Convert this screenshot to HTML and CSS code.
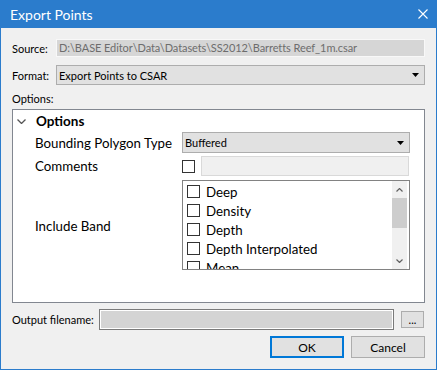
FILE: index.html
```html
<!DOCTYPE html>
<html lang="en">
<head>
    <meta charset="UTF-8">
    <title>Export Points</title>
    <link rel="stylesheet" href="styles.css">
</head>
<body>
    <div class="window">
        <div class="titlebar">
            <span class="title">Export Points</span>
            <svg class="close" width="10" height="10" viewBox="0 0 10 10">
                <path d="M0.5 0.5 L9.5 9.5 M9.5 0.5 L0.5 9.5" stroke="#fff" stroke-width="1.1" fill="none"/>
            </svg>
        </div>

        <div class="content">
            <div class="row row-source">
                <span class="lbl">Source:</span>
                <div class="field-readonly">D:\BASE Editor\Data\Datasets\SS2012\Barretts Reef_1m.csar</div>
            </div>

            <div class="row row-format">
                <span class="lbl">Format:</span>
                <div class="combo combo-format">
                    <span>Export Points to CSAR</span>
                    <svg class="combo-arrow" width="7" height="4" viewBox="0 0 7 4"><path d="M0 0 H7 L3.5 4 Z" fill="#000"/></svg>
                </div>
            </div>

            <div class="options-label">Options:</div>

            <div class="panel">
                <div class="group-head">
                    <svg class="chevron" width="9" height="5" viewBox="0 0 9 5"><path d="M0.5 0.5 L4.5 4.5 L8.5 0.5" stroke="#555" stroke-width="1.3" fill="none"/></svg>
                    <span>Options</span>
                </div>

                <div class="prop-grid">
                    <div class="prop-label">Bounding Polygon Type</div>
                    <div class="combo combo-prop">
                        <span>Buffered</span>
                        <svg class="combo-arrow" width="7" height="4" viewBox="0 0 7 4"><path d="M0 0 H7 L3.5 4 Z" fill="#000"/></svg>
                    </div>

                    <div class="prop-label">Comments</div>
                    <div class="comments">
                        <span class="check"></span>
                        <div class="field-disabled"></div>
                    </div>

                    <div class="prop-label prop-label-band">Include Band</div>
                    <div class="listbox">
                        <div class="list-items">
                            <div class="item"><span class="check"></span>Deep</div>
                            <div class="item"><span class="check"></span>Density</div>
                            <div class="item"><span class="check"></span>Depth</div>
                            <div class="item"><span class="check"></span>Depth Interpolated</div>
                            <div class="item"><span class="check"></span>Mean</div>
                        </div>
                        <div class="scrollbar">
                            <div class="sb-btn">
                                <svg width="7" height="4" viewBox="0 0 7 4"><path d="M0.5 3.5 L3.5 0.5 L6.5 3.5" stroke="#606060" stroke-width="1.2" fill="none"/></svg>
                            </div>
                            <div class="sb-track"><div class="sb-thumb"></div></div>
                            <div class="sb-btn">
                                <svg width="7" height="4" viewBox="0 0 7 4"><path d="M0.5 0.5 L3.5 3.5 L6.5 0.5" stroke="#606060" stroke-width="1.2" fill="none"/></svg>
                            </div>
                        </div>
                    </div>
                </div>
            </div>

            <div class="row row-output">
                <span class="lbl lbl-output">Output filename:</span>
                <div class="field-output"></div>
                <button class="btn btn-browse">...</button>
            </div>

            <div class="buttons">
                <button class="btn btn-dialog btn-default">OK</button>
                <button class="btn btn-dialog">Cancel</button>
            </div>
        </div>
    </div>
</body>
</html>
```

FILE: styles.css
```css
* {
    margin: 0;
    padding: 0;
    box-sizing: border-box;
}

body {
    background: #fff;
    font-family: "Lato", "Open Sans", sans-serif;
    font-size: 11px;
    color: #000;
}

.window {
    width: 437px;
    height: 370px;
    border: 1px solid #2b7ccc;
    border-top: none;
    background: #f0f0f0;
}

/* title bar */
.titlebar {
    height: 28px;
    margin: 0 -1px;
    background: #2b7ccc;
    display: flex;
    align-items: center;
    justify-content: space-between;
    padding: 0 9px 0 10px;
}

.title {
    color: #fff;
    font-size: 14px;
}

.close {
    display: block;
}

.content {
    padding: 11px 11px 0 11px;
}

.row {
    display: flex;
    align-items: center;
}

.lbl {
    width: 44px;
    flex: none;
}

.row-source {
    height: 18px;
}

.field-readonly {
    flex: 1;
    height: 18px;
    line-height: 16px;
    padding-left: 2px;
    background: #d6d6d6;
    border: 1px solid #f8f8f8;
    color: #6d6d6d;
    letter-spacing: -0.08px;
    white-space: nowrap;
    overflow: hidden;
}

.row-format {
    margin-top: 8px;
    height: 20px;
}

.combo {
    display: flex;
    align-items: center;
    justify-content: space-between;
    background: #e1e1e1;
    border: 1px solid #adadad;
    padding: 0 5px 0 2px;
}

.combo-format {
    flex: 1;
    height: 20px;
}

.combo-arrow {
    display: block;
}

.options-label {
    margin: 5px 0 2px;
    height: 17px;
    line-height: 17px;
}

/* options panel */
.panel {
    height: 194px;
    background: #fff;
    border: 1px solid #828790;
}

.group-head {
    height: 22px;
    display: flex;
    align-items: center;
    padding-left: 4px;
}

.chevron {
    display: block;
    margin-right: 10px;
}

.group-head span {
    font-weight: bold;
    font-size: 13.5px;
}

.prop-grid {
    display: grid;
    grid-template-columns: 147px 228px;
    grid-template-rows: 21px 20px 90px;
    row-gap: 3px;
    padding-left: 22px;
    font-size: 13.3px;
}

.prop-label {
    display: flex;
    align-items: center;
}

.prop-label-band {
    padding-top: 3px;
}

.combo-prop {
    height: 21px;
    font-size: 11px;
}

.comments {
    display: flex;
    align-items: center;
}

.check {
    display: block;
    flex: none;
    width: 13px;
    height: 13px;
    border: 1px solid #333;
    background: #fff;
}

.field-disabled {
    flex: 1;
    height: 20px;
    margin-left: 6px;
    margin-right: 1px;
    background: #f0f0f0;
    border: 1px solid #d9d9d9;
}

.listbox {
    margin-top: 1px;
    height: 90px;
    border: 1px solid #828282;
    display: flex;
    overflow: hidden;
}

.list-items {
    flex: 1;
    padding: 1px 0 0 4px;
    overflow: hidden;
}

.item {
    height: 19px;
    display: flex;
    align-items: center;
    gap: 6px;
    white-space: nowrap;
}

.scrollbar {
    width: 15px;
    margin-right: 2px;
    background: #f0f0f0;
    display: flex;
    flex-direction: column;
}

.sb-btn {
    height: 17px;
    display: flex;
    align-items: center;
    justify-content: center;
}

.sb-btn svg {
    display: block;
}

.sb-track {
    flex: 1;
}

.sb-thumb {
    height: 30px;
    background: #cdcdcd;
}

/* bottom */
.row-output {
    margin-top: 6px;
    height: 21px;
}

.lbl-output {
    width: 87px;
}

.field-output {
    width: 295px;
    height: 21px;
    background: #d4d4d4;
    border: 1px solid #7a7a7a;
    box-shadow: inset 0 0 0 1px #fff;
}

.btn {
    font-family: inherit;
    font-size: 11px;
    background: #e1e1e1;
    border: 1px solid #adadad;
    color: #000;
}

.btn-browse {
    width: 23px;
    height: 17px;
    margin-left: 7px;
    line-height: 11px;
}

.buttons {
    margin-top: 6px;
    display: flex;
    justify-content: flex-end;
    gap: 7px;
}

.btn-dialog {
    width: 74px;
    height: 22px;
    font-size: 12px;
}

.btn-default {
    border: 2px solid #0078d7;
}
```
